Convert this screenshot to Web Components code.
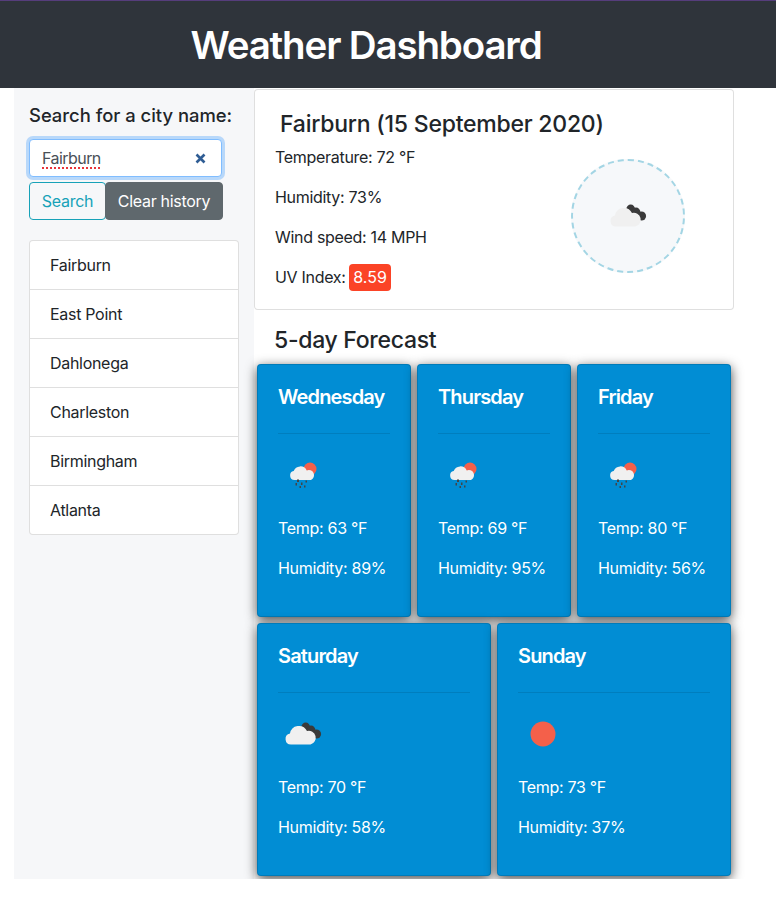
<!DOCTYPE html>
<html>
<head>
<meta charset="utf-8">
<title>Weather Dashboard</title>
<style>
  html, body { margin: 0; background: #fff; }
  body { font-family: Inter, "Liberation Sans", sans-serif; font-size: 16px; letter-spacing: -0.3px; color: #212529; }
</style>
</head>
<body>

<template id="app-header">
  <style>
    :host { display: block; }
    header {
      box-sizing: border-box;
      height: 88px;
      border-top: 1px solid #563d7c;
      padding: 2px 44px 0 0;
      background: #2f343b;
      display: flex;
      align-items: center;
      justify-content: center;
    }
    h1 { margin: 0; font-size: 38.5px; font-weight: 600; letter-spacing: -1.15px; line-height: 1.2; color: #fff; }
  </style>
  <header><h1><slot></slot></h1></header>
</template>

<template id="weather-icon">
  <style>
    :host { display: block; width: 50px; height: 50px; }
    svg { display: block; }
  </style>
  <svg width="50" height="50" viewBox="0 0 50 50"></svg>
</template>

<template id="city-search">
  <style>
    :host { display: block; }
    label { display: block; font-size: 18.4px; font-weight: 500; letter-spacing: 0; line-height: 27px; margin-bottom: 10px; white-space: nowrap; }
    .input {
      box-sizing: border-box;
      width: 193px;
      height: 38px;
      background: #fff;
      border: 1px solid #80bdff;
      border-radius: 4px;
      box-shadow: 0 0 0 3px rgba(0,123,255,.25);
      padding: 0 15px 0 12px;
      display: flex;
      align-items: center;
      justify-content: space-between;
      color: #495057;
    }
    .typed { letter-spacing: -0.55px; text-decoration: underline dotted #e8343a 2px; text-underline-offset: 3px; }
    .buttons { display: flex; margin-top: 5px; }
    button {
      box-sizing: border-box;
      height: 38px;
      font: inherit;
      letter-spacing: inherit;
      border-radius: 4px;
      cursor: pointer;
    }
    .search { width: 77px; background: transparent; border: 1px solid #17a2b8; color: #17a2b8; padding: 0; }
    .clear { width: 118px; margin-left: -1px; background: #5f686d; border: 1px solid #5f686d; color: #fff; padding: 0; }
  </style>
  <label>Search for a city name:</label>
  <div class="input">
    <span class="typed">Fairburn</span>
    <svg width="11" height="11" viewBox="0 0 11 11"><path d="M1.5 1.5l8 8M9.5 1.5l-8 8" stroke="#2f5d94" stroke-width="2.6"/></svg>
  </div>
  <div class="buttons">
    <button class="search">Search</button>
    <button class="clear">Clear history</button>
  </div>
</template>

<template id="city-list">
  <style>
    :host { display: block; margin-top: 20px; }
    ul {
      list-style: none;
      margin: 0;
      padding: 0;
      border: 1px solid rgba(0,0,0,.125);
      border-radius: 4px;
      background: #fff;
    }
  </style>
  <ul><slot></slot></ul>
</template>

<template id="city-item">
  <style>
    :host { display: block; padding: 12px 20px; line-height: 24px; border-top: 1px solid rgba(0,0,0,.125); }
    :host(:first-child) { border-top: 0; }
  </style>
  <slot></slot>
</template>

<template id="current-weather">
  <style>
    :host { display: block; }
    section {
      width: 480px;
      box-sizing: border-box;
      padding: 20px;
      height: 221px;
      margin-top: 1px;
      background: #fff;
      border: 1px solid rgba(0,0,0,.125);
      border-radius: 4px;
    }
    h2 { margin: 0 0 7px; padding-left: 5px; font-size: 23px; font-weight: 500; letter-spacing: -0.23px; line-height: 28px; }
    .body { display: flex; justify-content: space-between; align-items: center; }
    .lines ::slotted(p) { margin: 0 0 16px; line-height: 24px; }
    .lines ::slotted(p:last-of-type) { margin-bottom: 0; }
    .disc {
      box-sizing: border-box;
      width: 114px;
      height: 114px;
      margin: 0 28px 4px 0;
      border: 2px dashed #a3d5e4;
      border-radius: 50%;
      background: #f6f8fa;
      display: flex;
      align-items: center;
      justify-content: center;
    }
  </style>
  <section>
    <h2><slot name="title"></slot></h2>
    <div class="body">
      <div class="lines"><slot></slot></div>
      <div class="disc"><slot name="icon"></slot></div>
    </div>
  </section>
</template>

<template id="uv-badge">
  <style>
    :host {
      display: inline-block;
      padding: 0 4.5px;
      height: 27px;
      line-height: 27px;
      background: #fb4326;
      color: #fff;
      border-radius: 4px;
      letter-spacing: 0;
      vertical-align: middle;
      margin: -2px 0 0 -1px;
    }
  </style>
  <slot></slot>
</template>

<template id="forecast-card">
  <style>
    :host {
      display: block;
      box-sizing: border-box;
      padding: 20px;
      background: #018dd4;
      color: #fff;
      border: 1px solid rgba(0,0,0,.125);
      border-radius: 4px;
      box-shadow: 0 3px 12px rgba(0,0,0,.72);
    }
    h3 { margin: 0 0 24px; font-size: 20px; font-weight: 600; letter-spacing: -0.85px; line-height: 24px; }
    hr { margin: 0 0 16px; border: 0; border-top: 1px solid rgba(0,0,0,.1); }
    ::slotted(weather-icon) { margin-bottom: 16px; }
    ::slotted(p) { margin: 0 0 16px; line-height: 24px; }
  </style>
  <h3><slot name="day"></slot></h3>
  <hr>
  <slot></slot>
</template>

<template id="forecast-grid">
  <style>
    :host { display: block; }
    h2 { margin: 16px 0 10px; padding-left: 20px; font-size: 23px; font-weight: 500; letter-spacing: -0.3px; line-height: 28px; }
    .grid {
      width: 474px;
      margin-left: 3px;
      padding-bottom: 3px;
      display: grid;
      grid-template-columns: repeat(6, 1fr);
      gap: 6px;
    }
    ::slotted(forecast-card) { grid-column: span 2; }
    ::slotted(forecast-card[wide]) { grid-column: span 3; }
  </style>
  <h2>5-day Forecast</h2>
  <div class="grid"><slot></slot></div>
</template>

<template id="weather-page">
  <style>
    :host { display: block; }
    .columns { display: flex; padding-left: 14px; }
    aside { box-sizing: border-box; width: 240px; padding: 14px 15px 0; background: #f6f7f9; }
    main { width: 480px; }
  </style>
  <div class="columns">
    <aside><slot name="side"></slot></aside>
    <main><slot></slot></main>
  </div>
</template>

<script>
  function stamp(name) {
    return class extends HTMLElement {
      constructor() {
        super();
        this.attachShadow({mode: 'open'})
          .appendChild(document.getElementById(name).content.cloneNode(true));
      }
    };
  }
  ['app-header', 'city-search', 'city-list', 'city-item', 'current-weather',
   'uv-badge', 'forecast-card', 'forecast-grid', 'weather-page'].forEach(function(name) {
    customElements.define(name, stamp(name));
  });

  const ICONS = {
    clouds: `
      <g fill="#3a3a3a"><circle cx="27.7" cy="18" r="4.4"/><circle cx="33" cy="21" r="4.4"/><circle cx="38.5" cy="25" r="4.6"/></g>
      <path d="M13 35.5a5.5 5.5 0 0 1-1-10.9 9 9 0 0 1 17-2.6 6.5 6.5 0 0 1 3.5 13.5z" fill="#f0f0f0"/>`,
    rain: `
      <circle cx="32" cy="19" r="6.5" fill="#f4604a"/>
      <path d="M16.5 30a4.5 4.5 0 0 1-.8-8.9 7 7 0 0 1 13-.6 4.7 4.7 0 0 1 4.3 9.5z" fill="#f0f0f0"/>
      <g fill="#444"><rect x="19" y="29.5" width="2" height="2.5"/><rect x="17.5" y="33" width="1.5" height="2.5"/><rect x="23" y="32.5" width="1.5" height="2.5"/><rect x="27.5" y="30.5" width="1.5" height="2"/><rect x="21.5" y="36" width="1.5" height="2"/><rect x="26" y="35.5" width="1.5" height="2"/></g>`,
    sun: `<circle cx="25" cy="25" r="12.5" fill="#f4604a"/>`
  };

  class WeatherIcon extends stamp('weather-icon') {
    connectedCallback() {
      this.shadowRoot.querySelector('svg').innerHTML = ICONS[this.getAttribute('kind')];
    }
  }
  customElements.define('weather-icon', WeatherIcon);
</script>

<app-header>Weather Dashboard</app-header>
<weather-page>
  <city-search slot="side"></city-search>
  <city-list slot="side">
    <city-item>Fairburn</city-item>
    <city-item>East Point</city-item>
    <city-item>Dahlonega</city-item>
    <city-item>Charleston</city-item>
    <city-item>Birmingham</city-item>
    <city-item>Atlanta</city-item>
  </city-list>

  <current-weather>
    <span slot="title">Fairburn (15 September 2020)</span>
    <p>Temperature: 72 °F</p>
    <p>Humidity: 73%</p>
    <p>Wind speed: 14 MPH</p>
    <p>UV Index: <uv-badge>8.59</uv-badge></p>
    <weather-icon slot="icon" kind="clouds"></weather-icon>
  </current-weather>

  <forecast-grid>
    <forecast-card>
      <span slot="day">Wednesday</span>
      <weather-icon kind="rain"></weather-icon>
      <p>Temp: 63 °F</p><p>Humidity: 89%</p>
    </forecast-card>
    <forecast-card>
      <span slot="day">Thursday</span>
      <weather-icon kind="rain"></weather-icon>
      <p>Temp: 69 °F</p><p>Humidity: 95%</p>
    </forecast-card>
    <forecast-card>
      <span slot="day">Friday</span>
      <weather-icon kind="rain"></weather-icon>
      <p>Temp: 80 °F</p><p>Humidity: 56%</p>
    </forecast-card>
    <forecast-card wide>
      <span slot="day">Saturday</span>
      <weather-icon kind="clouds"></weather-icon>
      <p>Temp: 70 °F</p><p>Humidity: 58%</p>
    </forecast-card>
    <forecast-card wide>
      <span slot="day">Sunday</span>
      <weather-icon kind="sun"></weather-icon>
      <p>Temp: 73 °F</p><p>Humidity: 37%</p>
    </forecast-card>
  </forecast-grid>
</weather-page>
</body>
</html>
